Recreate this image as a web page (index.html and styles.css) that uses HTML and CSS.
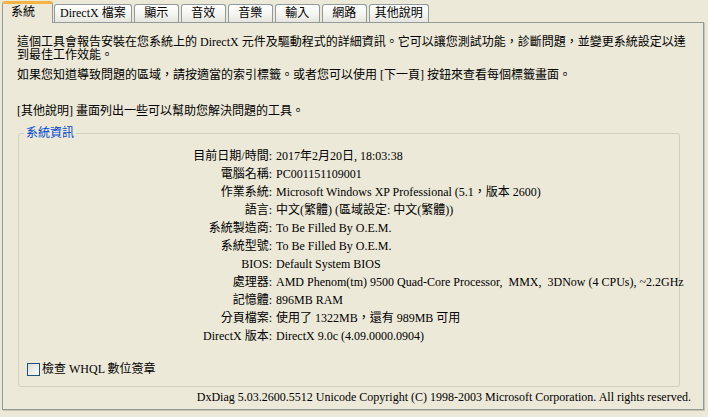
FILE: index.html
```html
<!DOCTYPE html>
<html lang="zh-Hant">
<head>
<meta charset="utf-8">
<title>DxDiag</title>
<link rel="stylesheet" href="styles.css">
</head>
<body>
<div class="dialog">
  <div class="tabs">
    <div class="tab tab-active">系統</div>
    <div class="tab">DirectX 檔案</div>
    <div class="tab">顯示</div>
    <div class="tab">音效</div>
    <div class="tab">音樂</div>
    <div class="tab">輸入</div>
    <div class="tab">網路</div>
    <div class="tab">其他說明</div>
  </div>
  <div class="panel">
    <p class="intro">這個工具會報告安裝在您系統上的 DirectX 元件及驅動程式的詳細資訊。它可以讓您測試功能，診斷問題，並變更系統設定以達<br>到最佳工作效能。</p>
    <p class="para2">如果您知道導致問題的區域，請按適當的索引標籤。或者您可以使用 [下一頁] 按鈕來查看每個標籤畫面。</p>
    <p class="para3">[其他說明] 畫面列出一些可以幫助您解決問題的工具。</p>
    <fieldset class="group">
      <legend class="group-title">系統資訊</legend>
      <div class="info">
        <div class="label">目前日期/時間:</div><div class="value">2017年2月20日, 18:03:38</div>
        <div class="label">電腦名稱:</div><div class="value">PC001151109001</div>
        <div class="label">作業系統:</div><div class="value">Microsoft Windows XP Professional (5.1，版本 2600)</div>
        <div class="label">語言:</div><div class="value">中文(繁體) (區域設定: 中文(繁體))</div>
        <div class="label">系統製造商:</div><div class="value">To Be Filled By O.E.M.</div>
        <div class="label">系統型號:</div><div class="value">To Be Filled By O.E.M.</div>
        <div class="label">BIOS:</div><div class="value">Default System BIOS</div>
        <div class="label">處理器:</div><div class="value">AMD Phenom(tm) 9500 Quad-Core Processor,&nbsp; MMX,&nbsp; 3DNow (4 CPUs), ~2.2GHz</div>
        <div class="label">記憶體:</div><div class="value">896MB RAM</div>
        <div class="label">分頁檔案:</div><div class="value">使用了 1322MB，還有 989MB 可用</div>
        <div class="label">DirectX 版本:</div><div class="value">DirectX 9.0c (4.09.0000.0904)</div>
      </div>
      <label class="check"><span class="box"></span><span>檢查 WHQL 數位簽章</span></label>
    </fieldset>
    <div class="footer">DxDiag 5.03.2600.5512 Unicode Copyright (C) 1998-2003 Microsoft Corporation. All rights reserved.</div>
  </div>
</div>
</body>
</html>
```
FILE: styles.css
```css
html, body {
  margin: 0;
  padding: 0;
  background: #ECE9D8;
}
body {
  width: 708px;
  height: 417px;
  overflow: hidden;
  font-family: "Liberation Serif", "Noto Sans CJK TC", serif;
  font-size: 12px;
  line-height: 12px;
  color: #000;
}
.dialog {
  padding: 1px 0 0 2px;
}
.tabs {
  display: flex;
  align-items: flex-end;
  height: 21px;
  gap: 2px;
}
.tab {
  box-sizing: border-box;
  height: 18px;
  min-width: 45px;
  padding: 0 5px;
  border: 1px solid #919B9C;
  border-bottom: none;
  border-radius: 3px 3px 0 0;
  background: linear-gradient(#FFFFFF, #F3F3EF 60%, #E6E5DD);
  text-align: center;
  line-height: 16px;
  white-space: nowrap;
}
.tab-active {
  position: relative;
  z-index: 1;
  height: 22px;
  min-width: 51px;
  margin-bottom: -1px;
  margin-right: -1px;
  background: #ECE9D8;
  border-top: 3px solid #F5B344;
  border-radius: 3px 3px 0 0;
  text-align: left;
  padding-left: 8px;
  line-height: 17px;
}
.panel {
  box-sizing: border-box;
  width: 702px;
  height: 388px;
  border: 1px solid #919B9C;
  background: #ECE9D8;
  box-shadow: 1px 1px 0 #C9C6B6;
  padding: 13px 12px 0 14px;
}
.panel p {
  margin: 0;
  white-space: nowrap;
}
.intro {
  line-height: 13px;
}
.para2 {
  margin-top: 7px !important;
}
.para3 {
  margin-top: 24px !important;
}
.group {
  margin: 10px 11px 0 1px;
  padding: 8px 0 10px 0;
  border: 1px solid #D0D0BF;
  border-radius: 3px;
  min-width: 0;
}
.group-title {
  margin-left: 5px;
  padding: 0 2px;
  color: #0046D5;
  line-height: 12px;
}
.info {
  display: grid;
  grid-template-columns: 253px 1fr;
  column-gap: 4px;
}
.label {
  text-align: right;
  line-height: 18px;
  white-space: nowrap;
}
.value {
  line-height: 18px;
  white-space: nowrap;
}
.check {
  display: flex;
  align-items: center;
  gap: 2px;
  margin: 17px 0 0 8px;
  height: 14px;
}
.box {
  box-sizing: border-box;
  width: 13px;
  height: 13px;
  border: 1px solid #1C5180;
  background: linear-gradient(135deg, #DCDCD7, #FFFFFF);
}
.footer {
  margin-top: 4px;
  text-align: right;
  white-space: nowrap;
}
```
